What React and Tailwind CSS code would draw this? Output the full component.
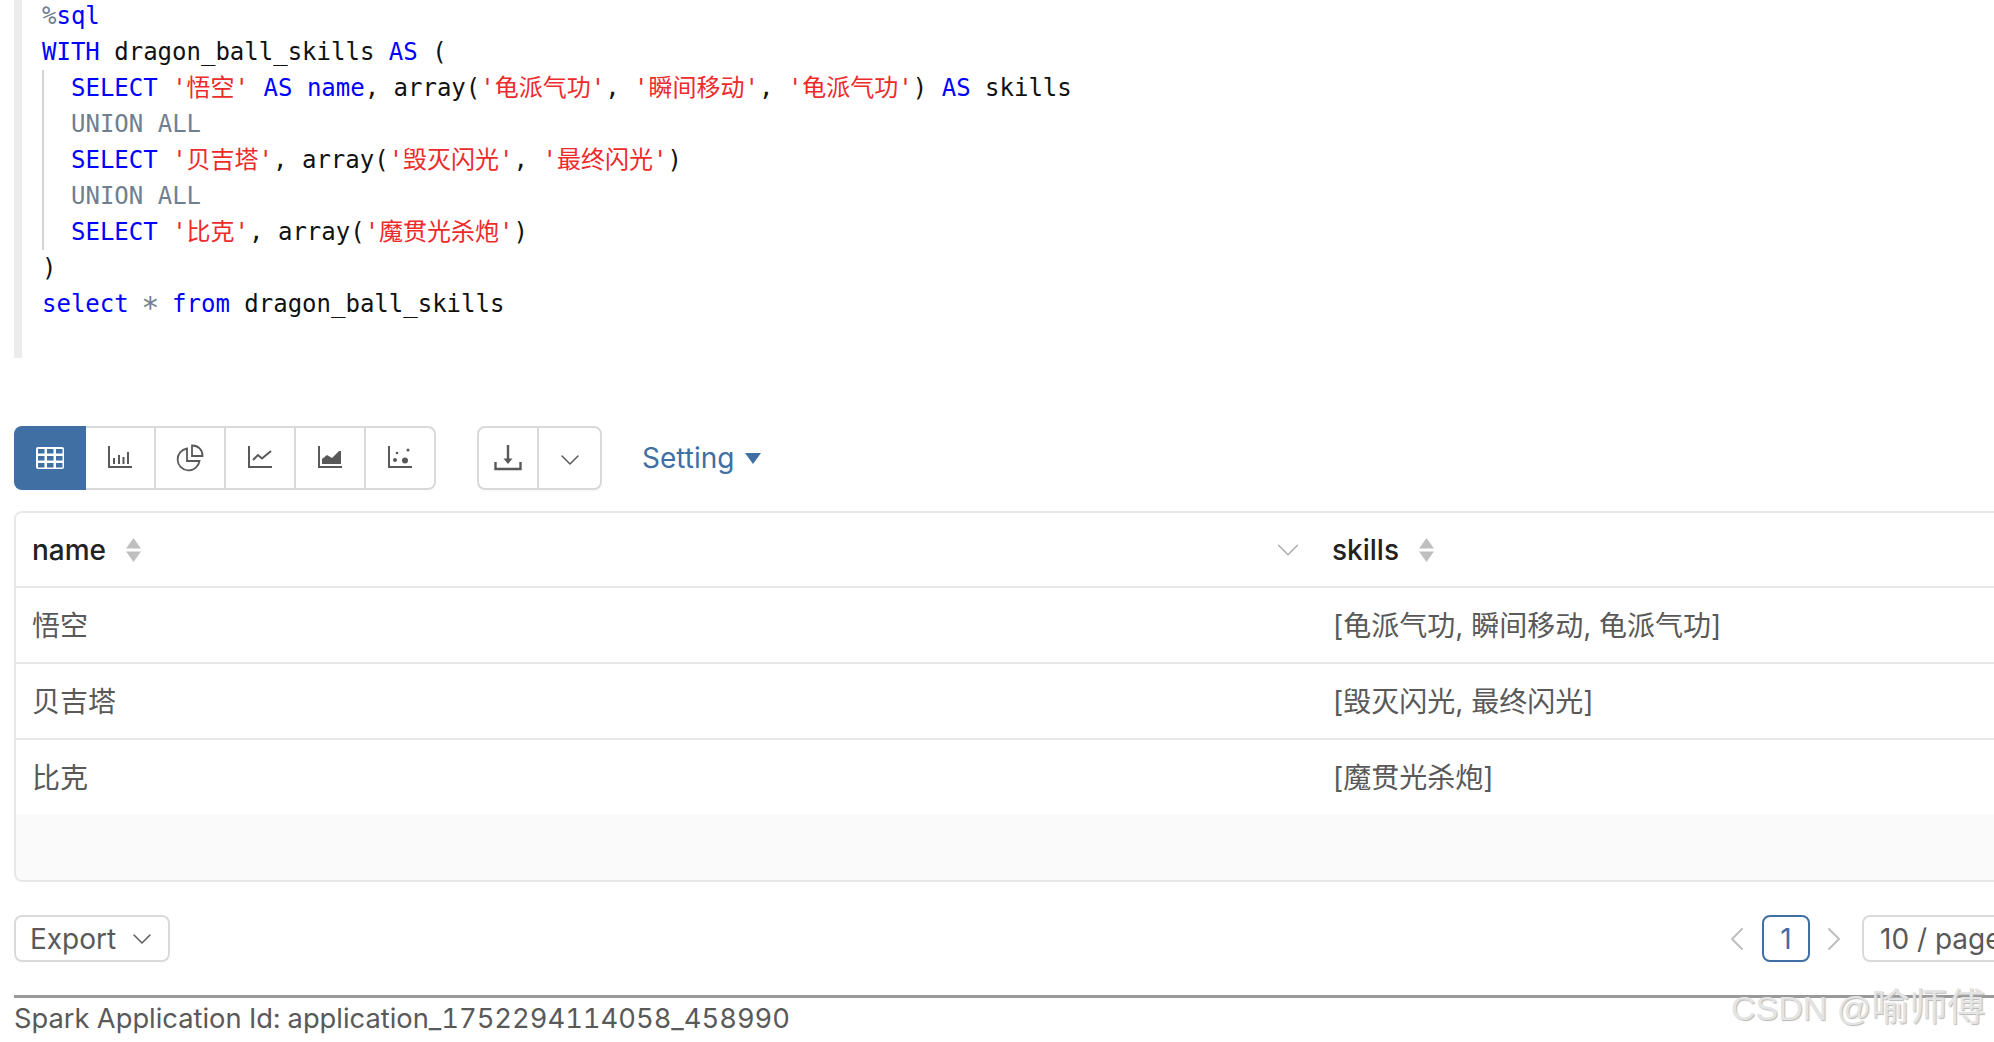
import { ChevronDown, ChevronLeft, ChevronRight } from "lucide-react"

const K = ({ children }) => <span className="text-[#0000ff]">{children}</span>
const G = ({ children }) => <span className="text-[#708090]">{children}</span>
const S = ({ children }) => <span className="text-[#ee2a2a]">{children}</span>
const Line = ({ children }) => <div className="h-9">{children}</div>

function Editor() {
  return (
    <div className="ml-[14px] h-[358px] overflow-hidden border-l-8 border-[#ececec] pl-5 font-['DejaVu_Sans_Mono','Noto_Sans_CJK_SC',monospace] text-2xl leading-9 whitespace-pre text-[#111]">
      <div className="-mt-[2px] h-9">
        <G>%</G>
        <K>sql</K>
      </div>
      <Line>
        <K>WITH</K> dragon_ball_skills <K>AS</K> (
      </Line>
      <div className="border-l-2 border-[#d4d4d4] pl-[27px]">
        <Line>
          <K>SELECT</K> <S>'悟空'</S> <K>AS</K> <K>name</K>, array(<S>'龟派气功'</S>, <S>'瞬间移动'</S>, <S>'龟派气功'</S>) <K>AS</K> skills
        </Line>
        <Line>
          <G>UNION ALL</G>
        </Line>
        <Line>
          <K>SELECT</K> <S>'贝吉塔'</S>, array(<S>'毁灭闪光'</S>, <S>'最终闪光'</S>)
        </Line>
        <Line>
          <G>UNION ALL</G>
        </Line>
        <Line>
          <K>SELECT</K> <S>'比克'</S>, array(<S>'魔贯光杀炮'</S>)
        </Line>
      </div>
      <Line>)</Line>
      <Line>
        <K>select</K> <span className="inline-block translate-y-[4px] scale-125 text-[#708090]">*</span> <K>from</K> dragon_ball_skills
      </Line>
    </div>
  )
}

const TableIcon = () => (
  <svg width="28" height="22" viewBox="0 0 28 22">
    <rect width="28" height="22" rx="2" fill="#fff" />
    {[2, 9, 16].map((y) =>
      [2, 11, 20].map((x) => <rect key={`${x}-${y}`} x={x} y={y} width="6.5" height="4.5" fill="#3f6fa3" />),
    )}
  </svg>
)

const Axis = () => <path d="M1 0v21h23" fill="none" stroke="#595959" strokeWidth="2" />

const BarIcon = () => (
  <svg width="24" height="24" viewBox="0 0 24 24">
    <Axis />
    <path d="M6 18v-6M11 18v-9M15.500 18v-7M20 18V6" stroke="#595959" strokeWidth="2" />
  </svg>
)

const PieIcon = () => (
  <svg width="28" height="28" viewBox="0 0 28 28" fill="none" stroke="#595959" strokeWidth="1.800">
    <path d="M11 4.500a11 11 0 1 0 12.500 12.500H11z" />
    <path d="M16 1.500a10 10 0 0 1 10.500 10.500H16z" />
  </svg>
)

const LineIcon = () => (
  <svg width="24" height="24" viewBox="0 0 24 24">
    <Axis />
    <path d="M5 14l5-5 4 3.500L23 5" fill="none" stroke="#595959" strokeWidth="2" />
  </svg>
)

const AreaIcon = () => (
  <svg width="24" height="24" viewBox="0 0 24 24">
    <Axis />
    <path d="M4 18v-5l5-4 5 3 7-7 2 0v13z" fill="#595959" />
  </svg>
)

const ScatterIcon = () => (
  <svg width="24" height="24" viewBox="0 0 24 24" fill="#595959">
    <Axis />
    <circle cx="7" cy="14" r="2" />
    <circle cx="9" cy="7" r="1.300" />
    <circle cx="17" cy="14.500" r="3" />
    <circle cx="20" cy="4" r="1.500" />
  </svg>
)

const DownloadIcon = () => (
  <svg width="28" height="26" viewBox="0 0 28 26" fill="none" stroke="#595959" strokeWidth="2.400">
    <path d="M1.500 17v7h25v-7" />
    <path d="M14 0v16" />
    <path d="M9.500 13.500h9L14 19z" fill="#595959" stroke="none" />
  </svg>
)

function SortIcon() {
  return (
    <svg width="15" height="24" viewBox="0 0 15 24" fill="#bfbfbf">
      <path d="M7.500 0l7.500 10.500H0z" />
      <path d="M7.500 24l7.500-10.500H0z" />
    </svg>
  )
}

function Toolbar() {
  const icons = [BarIcon, PieIcon, LineIcon, AreaIcon, ScatterIcon]
  return (
    <div className="mt-[68px] ml-[14px] flex h-16 items-center">
      <div className="flex h-16 w-[422px]">
        <div className="flex w-[72px] shrink-0 items-center justify-center rounded-l-lg bg-[#3f6fa3]">
          <TableIcon />
        </div>
        <div className="flex flex-1 rounded-r-lg border-y-2 border-r-2 border-[#d9d9d9]">
          {icons.map((Icon, i) => (
            <div key={i} className={`flex items-center justify-center ${i < 4 ? "w-[70px] border-r-2 border-[#d9d9d9]" : "w-[68px]"}`}>
              <Icon />
            </div>
          ))}
        </div>
      </div>
      <div className="ml-[41px] flex h-16 w-[125px] rounded-lg border-2 border-[#d9d9d9] shadow-[0_2px_0_rgba(0,0,0,0.02)]">
        <div className="flex w-[60px] items-center justify-center border-r-2 border-[#d9d9d9]">
          <DownloadIcon />
        </div>
        <div className="flex flex-1 items-center justify-center pt-1">
          <ChevronDown size={32} strokeWidth={1.100} color="#595959" />
        </div>
      </div>
      <div className="ml-10 flex items-center gap-[11px] text-[28px] text-[#3f6fa3]">
        Setting
        <div className="h-0 w-0 border-x-8 border-t-[11px] border-x-transparent border-t-[#3f6fa3]"></div>
      </div>
    </div>
  )
}

const rows = [
  ["悟空", "[龟派气功, 瞬间移动, 龟派气功]"],
  ["贝吉塔", "[毁灭闪光, 最终闪光]"],
  ["比克", "[魔贯光杀炮]"],
]

function ResultTable() {
  return (
    <div className="mt-[21px] ml-[14px] h-[371px] w-[2100px] overflow-hidden rounded-lg border-2 border-[#e8e8e8] bg-[#fafafa]">
      <div className="flex h-[75px] items-center border-b-2 border-[#e8e8e8] bg-white text-[28px] font-medium text-[#222]">
        <div className="flex w-[1302px] items-center pl-4">
          name
          <span className="ml-[20px] flex"><SortIcon /></span>
          <ChevronDown className="mr-[11px] ml-auto" size={38} strokeWidth={0.800} color="#a8a8a8" />
        </div>
        <div className="flex items-center pl-[14px]">
          skills
          <span className="ml-[20px] flex"><SortIcon /></span>
        </div>
      </div>
      {rows.map((row, i) => (
        <div key={i} className={`flex items-center bg-white pt-[2px] text-[28px] text-[#595959] ${i < 2 ? "h-[76px] border-b-2 border-[#e8e8e8]" : "h-[74px]"}`}>
          <div className="w-[1302px] pl-4">{row[0]}</div>
          <div className="pl-[15px]">{row[1]}</div>
        </div>
      ))}
    </div>
  )
}

function Footer() {
  return (
    <div className="mt-[33px] ml-[14px] flex w-[2100px] items-center text-[28px] text-[#595959]">
      <div className="flex h-[47px] w-[156px] items-center rounded-lg border-2 border-[#d9d9d9] pl-[14px]">
        Export
        <ChevronDown className="ml-[10px]" size={32} strokeWidth={1.100} />
      </div>
      <ChevronLeft className="ml-[1547px]" size={40} strokeWidth={1.200} color="#bfbfbf" />
      <div className="ml-[5px] flex h-[47px] w-12 items-center justify-center rounded-lg border-2 border-[#3f6fa3] text-[#3f6fa3]">1</div>
      <ChevronRight className="ml-[4px]" size={40} strokeWidth={1.200} color="#bfbfbf" />
      <div className="ml-[8px] flex h-[47px] w-[240px] items-center rounded-lg border-2 border-[#d9d9d9] pl-4">10 / page</div>
    </div>
  )
}

export default function App() {
  return (
    <div className="relative h-[1042px] w-[1994px] overflow-hidden bg-white font-['Inter','Noto_Sans_CJK_SC',sans-serif]">
      <Editor />
      <Toolbar />
      <ResultTable />
      <Footer />
      <div className="mt-[33px] ml-[14px] h-[3px] bg-[#999]"></div>
      <div className="ml-[14px] pt-[3px] text-[27.300px] leading-9 text-[#595959] tabular-nums">Spark Application Id: application_1752294114058_458990</div>
      {/* watermark */}
      <div className="absolute top-[982px] left-[1731px] font-['Liberation_Sans','Noto_Sans_CJK_SC',sans-serif] text-[34px] leading-[50px] whitespace-nowrap text-[#e4e4e4] [text-shadow:1px_1px_1px_#b8b8b8]">
        CSDN @<span className="text-[38px]">喻师傅</span>
      </div>
    </div>
  )
}
